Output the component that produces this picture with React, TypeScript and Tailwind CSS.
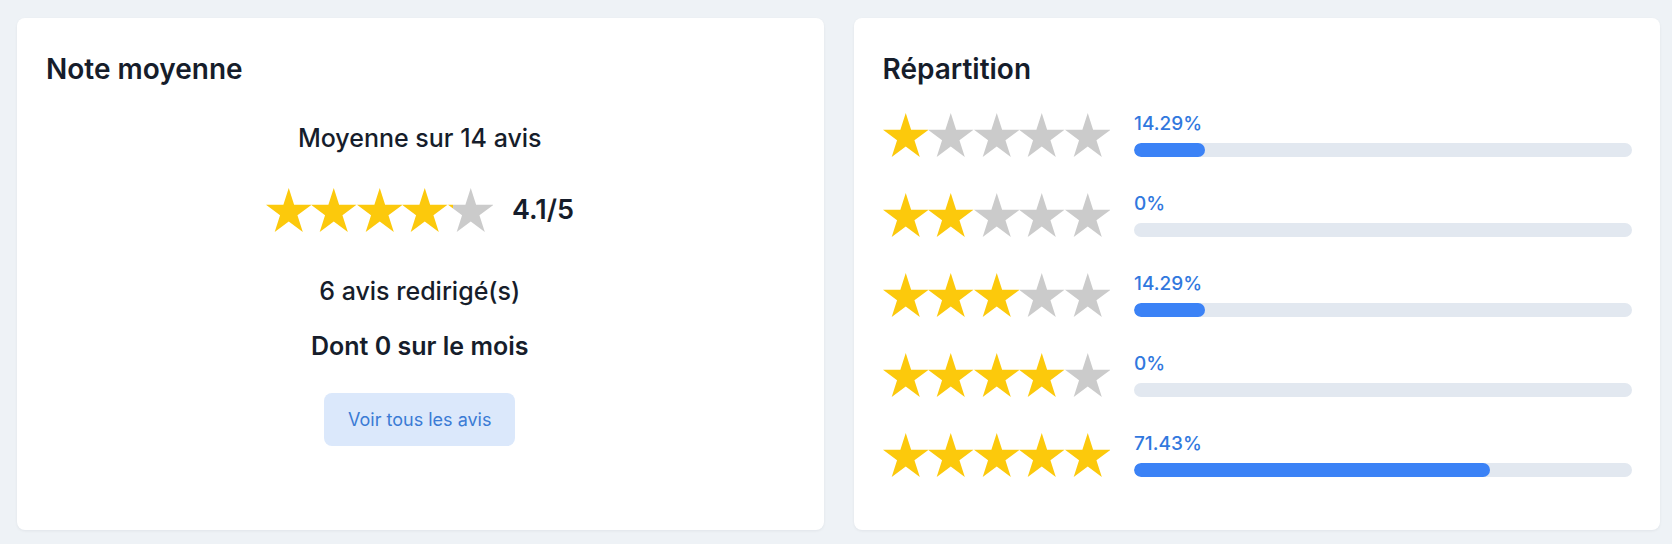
import { useId } from 'react';

const DISTRIBUTION = [
  { stars: 1, percent: 14.29 },
  { stars: 2, percent: 0 },
  { stars: 3, percent: 14.29 },
  { stars: 4, percent: 0 },
  { stars: 5, percent: 71.43 },
];

const STAR_POINTS =
  '50,0 61.8,36.33 100,36.33 69.1,58.78 80.9,95.1 50,72.65 19.1,95.1 30.9,58.78 0,36.33 38.2,36.33';

const GOLD = '#fcc90c';
const GREY = '#cbcbcb';

function Star({ fill }: { fill: number }) {
  const id = useId();
  const partial = fill > 0 && fill < 1;
  return (
    <svg viewBox="0 0 100 95.1" className="w-[45.5px] h-[44px] shrink-0" preserveAspectRatio="none">
      {partial && (
        <defs>
          <linearGradient id={id} x1="0" x2="1" y1="0" y2="0">
            <stop offset={fill} stopColor={GOLD} />
            <stop offset={fill} stopColor={GREY} />
          </linearGradient>
        </defs>
      )}
      <polygon points={STAR_POINTS} fill={partial ? `url(#${id})` : fill >= 1 ? GOLD : GREY} />
    </svg>
  );
}

function Stars({ value }: { value: number }) {
  return (
    <div className="flex">
      {Array.from({ length: 5 }).map((_, i) => (
        <Star key={i} fill={Math.max(0, Math.min(1, value - i))} />
      ))}
    </div>
  );
}

export default function App() {
  return (
    <div className="min-h-screen bg-[#eef2f6] pt-[18px] pl-[17px] pr-[12px] pb-[14px] font-['Inter',sans-serif] text-[#161d2b]">
      <div className="grid grid-cols-2 gap-[30px]">
        {/* Note moyenne */}
        <div className="bg-white rounded-lg shadow-[0_1px_3px_rgba(15,23,42,0.06)] h-[512px] pl-[29px] pr-[30px] pt-[33px]">
          <h2 className="text-[28px] leading-[36px] font-semibold">Note moyenne</h2>
          <div className="flex flex-col items-center">
            <p className="mt-[35px] text-[25px] leading-[32px] font-medium">Moyenne sur 14 avis</p>
            <div className="mt-[34px] flex items-center gap-[19px]">
              <Stars value={4.1} />
              <span className="text-[27px] leading-[32px] font-semibold">4.1/5</span>
            </div>
            <p className="mt-[43px] text-[25px] leading-[32px] font-medium">6 avis redirigé(s)</p>
            <p className="mt-[23px] text-[25px] leading-[32px] font-semibold">Dont 0 sur le mois</p>
            <button className="mt-[31px] h-[53px] px-[24px] rounded-lg bg-[#dbe8fb] text-[#3a7bd5] text-[18px]">
              Voir tous les avis
            </button>
          </div>
        </div>

        {/* Répartition */}
        <div className="bg-white rounded-lg shadow-[0_1px_3px_rgba(15,23,42,0.06)] h-[512px] pl-[29px] pr-[28px] pt-[33px]">
          <h2 className="text-[28px] leading-[36px] font-semibold">Répartition</h2>
          <div className="mt-[26px] flex flex-col gap-[36px]">
            {DISTRIBUTION.map((row) => (
              <div key={row.stars} className="flex items-stretch gap-[24px] h-[44px]">
                <Stars value={row.stars} />
                <div className="flex-1 flex flex-col justify-between">
                  <span className="text-[19px] leading-[22px] font-medium text-[#3178de]">{row.percent}%</span>
                  <div className="h-[14px] rounded-full bg-[#e2e8f0] overflow-hidden">
                    <div className="h-full rounded-full bg-[#3b82f6]" style={{ width: `${row.percent}%` }} />
                  </div>
                </div>
              </div>
            ))}
          </div>
        </div>
      </div>
    </div>
  );
}
